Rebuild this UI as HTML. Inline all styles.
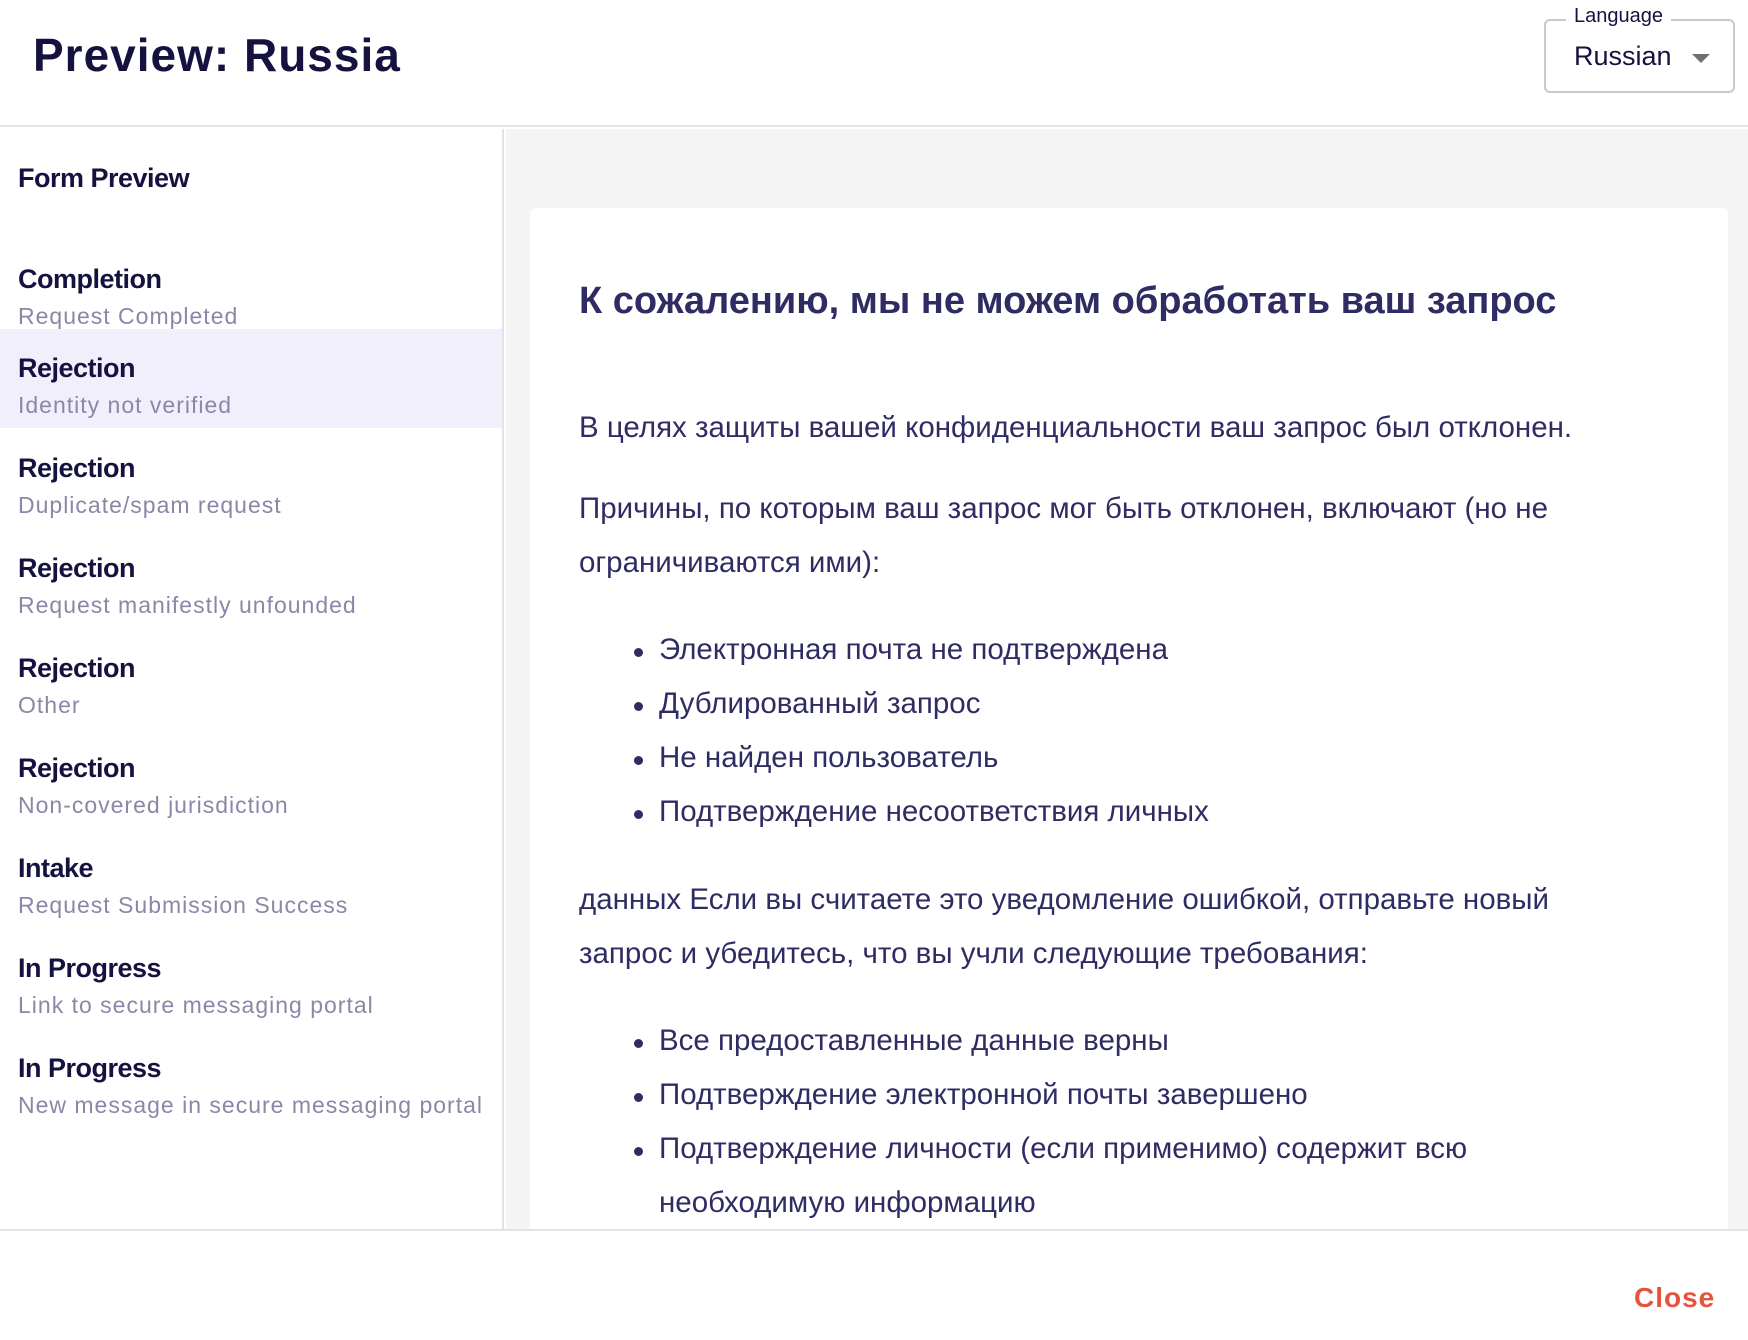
<!DOCTYPE html>
<html><head><meta charset="utf-8"><style>
*{box-sizing:border-box;margin:0;padding:0}
body{width:1748px;height:1340px;overflow:hidden;background:#fff;font-family:"Liberation Sans",sans-serif;position:relative}
.hdr{position:absolute;left:0;top:0;width:1748px;height:127px;border-bottom:2px solid #e3e3e6;background:#fff}
.title{position:absolute;left:33px;top:28px;font-size:46px;font-weight:bold;color:#15123f;letter-spacing:1px}
.sel{position:absolute;left:1544px;top:19px;width:191px;height:74px;border:2px solid #c9c9c9;border-radius:6px}
.sel .lab{position:absolute;left:20px;top:-16px;background:#fff;padding:0 8px;font-size:20px;color:#15123f}
.sel .val{position:absolute;left:28px;top:20px;font-size:27px;color:#15123f}
.sel .arr{position:absolute;left:146px;top:33px;width:0;height:0;border-left:9px solid transparent;border-right:9px solid transparent;border-top:9px solid #707070}
.side{position:absolute;left:0;top:129px;width:504px;height:1100px;border-right:2px solid #e3e3e6;background:#fff}
.side h3{position:absolute;left:18px;top:34px;font-size:27px;color:#15123f;font-weight:bold;letter-spacing:-0.5px}
.item{position:absolute;left:0;width:502px;height:99px;padding:24px 0 0 18px}
.item.on{background:#f2effc}
.item b{display:block;font-size:27px;color:#15123f;letter-spacing:-0.5px}
.item span{display:block;margin-top:8px;font-size:23px;color:#8a87a8;letter-spacing:1px}
.main{position:absolute;left:506px;top:129px;width:1242px;height:1100px;background:#f4f4f4;overflow:hidden}
.card{position:absolute;left:24px;top:79px;width:1198px;height:1100px;background:#fff;border-radius:6px;padding:0 0 0 49px;color:#2f2c63}
.card h1{position:absolute;left:49px;top:72px;font-size:38px;font-weight:bold;white-space:nowrap}
.p{position:absolute;left:49px;font-size:29.5px;white-space:nowrap}
.li{position:absolute;left:129px;font-size:29.5px;white-space:nowrap}
.li:before{content:"";position:absolute;left:-25px;top:15px;width:9px;height:9px;border-radius:50%;background:#2f2c63}
.foot{position:absolute;left:0;top:1229px;width:1748px;height:111px;border-top:2px solid #e3e3e6;background:#fff}
.close{position:absolute;left:1634px;top:51px;font-size:28px;font-weight:bold;color:#e5533d;letter-spacing:1px}
</style></head><body>
<div class="hdr"><div class="title">Preview: Russia</div>
<div class="sel"><div class="lab">Language</div><div class="val">Russian</div><div class="arr"></div></div></div>
<div class="side"><h3>Form Preview</h3>
<div class="item" style="top:111px"><b>Completion</b><span>Request Completed</span></div>
<div class="item on" style="top:200px"><b>Rejection</b><span>Identity not verified</span></div>
<div class="item" style="top:300px"><b>Rejection</b><span>Duplicate/spam request</span></div>
<div class="item" style="top:400px"><b>Rejection</b><span>Request manifestly unfounded</span></div>
<div class="item" style="top:500px"><b>Rejection</b><span>Other</span></div>
<div class="item" style="top:600px"><b>Rejection</b><span>Non-covered jurisdiction</span></div>
<div class="item" style="top:700px"><b>Intake</b><span>Request Submission Success</span></div>
<div class="item" style="top:800px"><b>In Progress</b><span>Link to secure messaging portal</span></div>
<div class="item" style="top:900px"><b>In Progress</b><span>New message in secure messaging portal</span></div>
</div>
<div class="main"><div class="card">
<h1>К сожалению, мы не можем обработать ваш запрос</h1>
<div class="p" style="top:203px">В целях защиты вашей конфиденциальности ваш запрос был отклонен.</div>
<div class="p" style="top:284px">Причины, по которым ваш запрос мог быть отклонен, включают (но не</div>
<div class="p" style="top:338px">ограничиваются ими):</div>
<div class="li" style="top:425px">Электронная почта не подтверждена</div>
<div class="li" style="top:479px">Дублированный запрос</div>
<div class="li" style="top:533px">Не найден пользователь</div>
<div class="li" style="top:587px">Подтверждение несоответствия личных</div>
<div class="p" style="top:675px">данных Если вы считаете это уведомление ошибкой, отправьте новый</div>
<div class="p" style="top:729px">запрос и убедитесь, что вы учли следующие требования:</div>
<div class="li" style="top:816px">Все предоставленные данные верны</div>
<div class="li" style="top:870px">Подтверждение электронной почты завершено</div>
<div class="li" style="top:924px">Подтверждение личности (если применимо) содержит всю</div>
<div class="p" style="top:978px;left:129px">необходимую информацию</div>
</div></div>
<div class="foot"><div class="close">Close</div></div>
</body></html>
